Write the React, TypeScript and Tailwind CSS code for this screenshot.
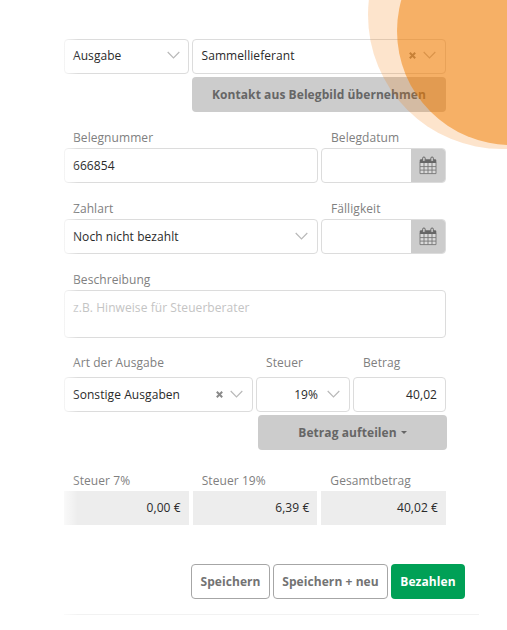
import React from "react";

function Chevron() {
  return (
    <svg className="relative top-[-0.5px] h-[8px] w-[13px] shrink-0" viewBox="0 0 13 8" fill="none" stroke="#b9b9b9" strokeWidth="1.2">
      <path d="M0.7 1 6.5 6.8 12.3 1" />
    </svg>
  );
}

function Clear() {
  return (
    <svg className="mr-[7px] h-[7px] w-[7px] shrink-0" viewBox="0 0 7 7" stroke="#8a8a8a" strokeWidth="2">
      <path d="M0.8 0.8 6.2 6.2M6.2 0.8 0.8 6.2" />
    </svg>
  );
}

function Calendar() {
  return (
    <svg className="mr-px h-[19px] w-[18px]" viewBox="0 0 18 19" fill="none">
      <path d="M1 6.5H17V17.6H1Z" fill="#dadada" />
      <path d="M0.7 4.5Q0.7 3.2 2 3.2H16Q17.3 3.2 17.3 4.5V7H0.7Z" fill="#666" />
      <path d="M1 6.5V17.6H17V6.5M1 10.6H17M1 14.1H17M5 7V17.5M9 7V17.5M13 7V17.5" stroke="#777" strokeWidth="0.9" />
      <rect x="3.6" y="1" width="2.6" height="4.6" rx="1.3" fill="#ccc" stroke="#666" />
      <rect x="11.8" y="1" width="2.6" height="4.6" rx="1.3" fill="#ccc" stroke="#666" />
    </svg>
  );
}

function Label({ children, className = "pl-[9px]" }: { children: React.ReactNode; className?: string }) {
  return <div className={"h-[20px] whitespace-nowrap leading-[20px] text-[#808080] " + className}>{children}</div>;
}

function Box({ children, className = "" }: { children?: React.ReactNode; className?: string }) {
  return (
    <div className={"flex h-[35px] items-center whitespace-nowrap rounded-[4px] border border-[#dcdcdc] bg-white px-2 text-[#2a2a2a] " + className}>
      {children}
    </div>
  );
}

function DateField({ label }: { label: string }) {
  return (
    <div className="w-[125px]">
      <Label className="pl-[10px]">{label}</Label>
      <div className="flex h-[35px] overflow-hidden rounded-[4px] border border-[#dcdcdc]">
        <div className="flex-1" />
        <div className="-my-px -mr-px flex w-[35px] items-center justify-center bg-[#ccc]">
          <Calendar />
        </div>
      </div>
    </div>
  );
}

function Sum({ label, value }: { label: string; value: string }) {
  return (
    <div className="flex-1">
      <Label>{label}</Label>
      <div className="flex h-[34px] items-center justify-end bg-[#ededed] pr-[8px] text-[#2a2a2a]">{value}</div>
    </div>
  );
}

export default function App() {
  return (
    <div className="relative h-[630px] w-[507px] overflow-hidden bg-white pl-[64px] pt-[39px] font-['Open_Sans',sans-serif] text-[12px] tracking-[0.07px]">
      <div className="w-[382px]">
        <div className="flex gap-[3px]">
          <Box className="w-[125px] justify-between pb-[2px]">
            Ausgabe
            <Chevron />
          </Box>
          <Box className="flex-1 pb-[2px] pr-[9px]">
            <span className="flex-1 pl-[0.5px]">Sammellieferant</span>
            <Clear />
            <Chevron />
          </Box>
        </div>
        <button className="ml-[128px] mt-[3px] flex h-[35px] w-[254px] items-center justify-center rounded-[4px] bg-[#ccc] font-bold text-[#666]">
          Kontakt aus Belegbild übernehmen
        </button>

        <div className="mt-[16px] flex gap-[3px]">
          <div className="w-[254px]">
            <Label>Belegnummer</Label>
            <Box>666854</Box>
          </div>
          <DateField label="Belegdatum" />
        </div>

        <div className="mt-[16px] flex gap-[3px]">
          <div className="w-[254px]">
            <Label>Zahlart</Label>
            <Box className="justify-between pr-[9px]">
              Noch nicht bezahlt
              <Chevron />
            </Box>
          </div>
          <DateField label="Fälligkeit" />
        </div>

        <div className="mt-[16px]">
          <Label>Beschreibung</Label>
          <div className="h-[48px] rounded-[4px] border border-[#dcdcdc] px-2 pt-[8px] leading-[18px] text-[#c4c4c4]">
            z.B. Hinweise für Steuerberater
          </div>
        </div>

        <div className="mt-[15px] flex gap-[3px]">
          <div className="w-[189px]">
            <Label className="mb-[4px] pl-[9px]">Art der Ausgabe</Label>
            <Box className="pr-[9px]">
              <span className="flex-1">Sonstige Ausgaben</span>
              <Clear />
              <Chevron />
            </Box>
          </div>
          <div className="w-[94px]">
            <Label className="mb-[4px] pl-[10px]">Steuer</Label>
            <Box className="justify-end gap-[9px] pr-[9px]">
              19%
              <Chevron />
            </Box>
          </div>
          <div className="flex-1">
            <Label className="mb-[4px] pl-[10px]">Betrag</Label>
            <Box className="justify-end">40,02</Box>
          </div>
        </div>
        <button className="ml-[194px] mt-[3px] flex h-[35px] w-[189px] items-center justify-center gap-[4px] rounded-[4px] bg-[#ccc] font-bold text-[#666]">
          Betrag aufteilen
          <span className="h-0 w-0 border-x-[3px] border-t-[3px] border-x-transparent border-t-[#666]" />
        </button>

        <div className="mt-[21px] flex gap-[4px]">
          <Sum label="Steuer 7%" value="0,00 €" />
          <Sum label="Steuer 19%" value="6,39 €" />
          <Sum label="Gesamtbetrag" value="40,02 €" />
        </div>
      </div>

      <div className="ml-[127px] mt-[39px] flex gap-[3px] font-bold text-[#737373]">
        <button className="h-[35px] w-[79px] rounded-[4px] border border-[#a6a6a6]">Speichern</button>
        <button className="h-[35px] w-[115px] whitespace-nowrap rounded-[4px] border border-[#a6a6a6]">Speichern + neu</button>
        <button className="h-[35px] w-[74px] rounded-[4px] bg-[#00a056] text-white">Bezahlen</button>
      </div>
      <div className="mt-[15px] h-px w-[415px] bg-[#f2f2f2]" />

      <div className="absolute left-[64px] top-0 h-full w-[14px] bg-linear-to-r from-white/70 to-transparent" />
      <div className="absolute left-[368px] top-[-119px] h-[268px] w-[268px] rounded-full bg-[#f57800]/20" />
      <div className="absolute left-[397px] top-[-83px] h-[228px] w-[228px] rounded-full bg-[#f17c00]/50" />
    </div>
  );
}
